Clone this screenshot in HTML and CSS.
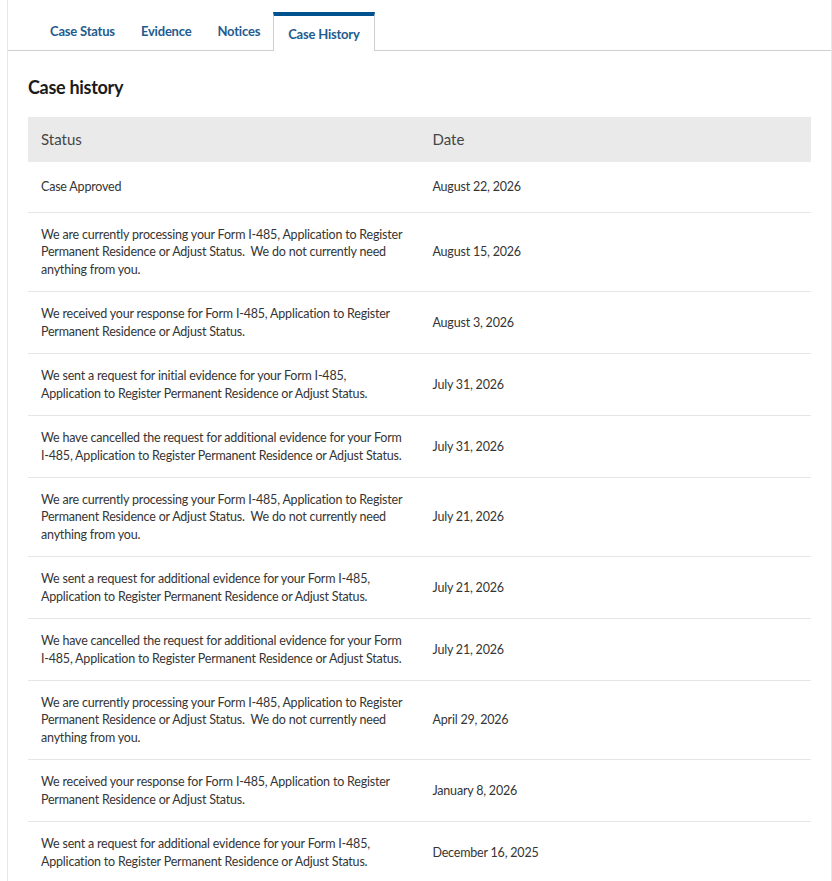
FILE: index.html
```html
<!DOCTYPE html>
<html lang="en">
<head>
    <meta charset="UTF-8">
    <meta name="viewport" content="width=device-width, initial-scale=1.0">
    <title>Case History</title>
    <link rel="stylesheet" href="styles.css">
</head>
<body>

<div class="case-panel">
    <!-- Tabs -->
    <ul class="tabs">
        <li><a href="#">Case Status</a></li>
        <li><a href="#">Evidence</a></li>
        <li><a href="#">Notices</a></li>
        <li class="active"><a href="#">Case History</a></li>
    </ul>

    <div class="history">
        <h2>Case history</h2>

        <table class="history-table">
            <thead>
                <tr>
                    <th>Status</th>
                    <th>Date</th>
                </tr>
            </thead>
            <tbody>
                <tr>
                    <td>Case Approved</td>
                    <td>August 22, 2026</td>
                </tr>
                <tr>
                    <td>We are currently processing your Form I-485, Application to Register Permanent Residence or Adjust Status.&nbsp; We do not currently need anything from you.</td>
                    <td>August 15, 2026</td>
                </tr>
                <tr>
                    <td>We received your response for Form I-485, Application to Register Permanent Residence or Adjust Status.</td>
                    <td>August 3, 2026</td>
                </tr>
                <tr>
                    <td>We sent a request for initial evidence for your Form I-485, Application to Register Permanent Residence or Adjust Status.</td>
                    <td>July 31, 2026</td>
                </tr>
                <tr>
                    <td>We have cancelled the request for additional evidence for your Form I-485, Application to Register Permanent Residence or Adjust Status.</td>
                    <td>July 31, 2026</td>
                </tr>
                <tr>
                    <td>We are currently processing your Form I-485, Application to Register Permanent Residence or Adjust Status.&nbsp; We do not currently need anything from you.</td>
                    <td>July 21, 2026</td>
                </tr>
                <tr>
                    <td>We sent a request for additional evidence for your Form I-485, Application to Register Permanent Residence or Adjust Status.</td>
                    <td>July 21, 2026</td>
                </tr>
                <tr>
                    <td>We have cancelled the request for additional evidence for your Form I-485, Application to Register Permanent Residence or Adjust Status.</td>
                    <td>July 21, 2026</td>
                </tr>
                <tr>
                    <td>We are currently processing your Form I-485, Application to Register Permanent Residence or Adjust Status.&nbsp; We do not currently need anything from you.</td>
                    <td>April 29, 2026</td>
                </tr>
                <tr>
                    <td>We received your response for Form I-485, Application to Register Permanent Residence or Adjust Status.</td>
                    <td>January 8, 2026</td>
                </tr>
                <tr>
                    <td>We sent a request for additional evidence for your Form I-485, Application to Register Permanent Residence or Adjust Status.</td>
                    <td>December 16, 2025</td>
                </tr>
            </tbody>
        </table>
    </div>
</div>

</body>
</html>
```

FILE: styles.css
```css
body {
    font-family: Lato, "Open Sans", sans-serif;
    margin: 0 0 0 7px;
    padding: 0;
    background-color: #fff;
    color: #353535;
}

.case-panel {
    border-left: 1px solid #e8e8e8;
    border-right: 1px solid #e8e8e8;
    min-height: 881px;
}

/* Tabs */
.tabs {
    display: flex;
    align-items: flex-end;
    list-style: none;
    margin: 0;
    padding: 12px 0 0 29px;
    border-bottom: 1px solid #cfcfcf;
}

.tabs li a {
    display: block;
    padding: 10px 13px;
    line-height: 18px;
    font-size: 13px;
    font-weight: bold;
    letter-spacing: -0.2px;
    color: #1f5c8f;
    text-decoration: none;
}

.tabs li.active {
    background-color: #fff;
    border: 1px solid #cfcfcf;
    border-top: 4px solid #00528f;
    border-bottom: none;
    margin-bottom: -1px;
}

.tabs li.active a {
    padding: 9px 14px 8px;
}

/* Case history table */
.history {
    padding: 0 20px;
}

.history h2 {
    margin: 24px 0 18px;
    font-size: 18px;
    line-height: 24px;
    letter-spacing: -0.3px;
    color: #1b1b1b;
}

.history-table {
    width: 100%;
    border-collapse: collapse;
    table-layout: fixed;
}

.history-table th {
    background-color: #eaeaea;
    text-align: left;
    font-weight: normal;
    font-size: 15px;
    line-height: 18px;
    color: #454545;
    padding: 13px 13px 14px;
    width: 50%;
}

.history-table td {
    font-size: 12.5px;
    letter-spacing: -0.2px;
    line-height: 17.43px;
    padding: 13px;
    height: 24px;
    vertical-align: middle;
    border-bottom: 1px solid #e6e6e6;
}
```
